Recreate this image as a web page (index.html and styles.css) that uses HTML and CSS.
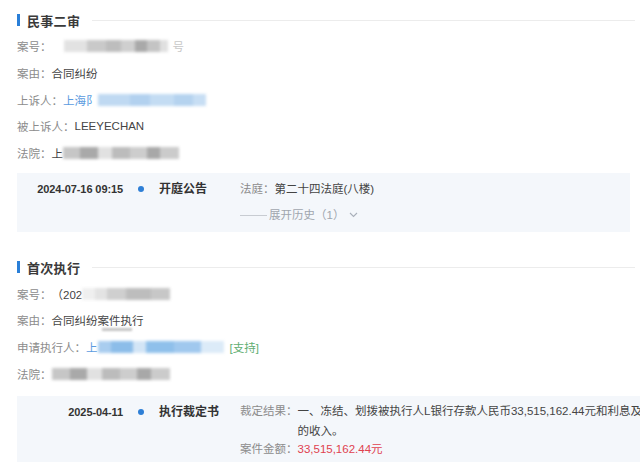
FILE: index.html
```html
<!DOCTYPE html>
<html lang="zh-CN">
<head>
    <meta charset="UTF-8">
    <title>案件信息</title>
    <link rel="stylesheet" href="styles.css">
</head>
<body>
    <div class="page">
        <div class="section">
            <div class="section-title"><span class="bar"></span><h2>民事二审</h2><span class="rule"></span></div>
            <div class="row"><span class="label">案号：</span><span class="blur gray w104 ml12"></span><span class="ghost">号</span></div>
            <div class="row"><span class="label">案由：</span><span class="value">合同纠纷</span></div>
            <div class="row"><span class="label">上诉人：</span><span class="link">上海阝</span><span class="blur blue w108"></span></div>
            <div class="row"><span class="label">被上诉人：</span><span class="value">LEEYECHAN</span></div>
            <div class="row"><span class="label">法院：</span><span class="value">上</span><span class="blur gray2 w116"></span></div>

            <div class="card">
                <div class="item">
                    <div class="date">2024-07-16 09:15</div>
                    <div class="dot-col"><span class="dot"></span></div>
                    <div class="kind">开庭公告</div>
                    <div class="detail">
                        <div class="line"><span class="label">法庭：</span><span class="value">第二十四法庭(八楼)</span></div>
                        <div class="line history"><span class="dash"></span>展开历史（1）<svg class="chev" width="9" height="6" viewBox="0 0 9 6"><path d="M1 1 L4.5 4.5 L8 1" fill="none" stroke="#a9b0ba" stroke-width="1.1"/></svg></div>
                    </div>
                </div>
            </div>
        </div>

        <div class="section second">
            <div class="section-title"><span class="bar"></span><h2>首次执行</h2><span class="rule"></span></div>
            <div class="row"><span class="label">案号：</span><span class="value">（202</span><span class="blur gray3 w88"></span></div>
            <div class="row"><span class="label">案由：</span><span class="value">合同纠纷案件执行</span><span class="smudge"></span></div>
            <div class="row"><span class="label">申请执行人：</span><span class="link">上</span><span class="blur blue2 w126"></span><span class="support">[支持]</span></div>
            <div class="row"><span class="label">法院：</span><span class="blur gray2 w118"></span></div>

            <div class="card wide">
                <div class="item">
                    <div class="date">2025-04-11</div>
                    <div class="dot-col"><span class="dot"></span></div>
                    <div class="kind">执行裁定书</div>
                    <div class="detail tight">
                        <div class="pair">
                            <span class="label">裁定结果：</span>
                            <span class="text">
                                <span class="block">一、冻结、划拨被执行人L银行存款人民币33,515,162.44元和利息及</span>
                                <span class="block">的收入。</span>
                            </span>
                        </div>
                        <div class="pair"><span class="label">案件金额：</span><span class="amount">33,515,162.44元</span></div>
                    </div>
                </div>
            </div>
        </div>
    </div>
</body>
</html>
```

FILE: styles.css
```css
html, body {
    margin: 0;
    overflow: hidden;
}
body {
    font-family: "Liberation Sans", "Noto Sans CJK SC", sans-serif;
    font-size: 11.5px;
    color: #444;
    background: #fff;
}
.page {
    padding: 10px 5px 0 17px;
}
.second {
    margin-top: 25px;
}
.section-title {
    display: flex;
    align-items: center;
    height: 20px;
}
.bar {
    width: 3px;
    height: 12px;
    background: #2a7fd8;
    margin-right: 7px;
}
.section-title h2 {
    margin: 0;
    font-size: 13px;
    font-weight: bold;
    color: #3a3a3a;
    letter-spacing: 0.3px;
}
.rule {
    flex: 1;
    height: 1px;
    background: #ececec;
    margin-left: 12px;
}
.section-title + .row {
    margin-top: 3px;
}
.row {
    display: flex;
    align-items: center;
    height: 26.7px;
    white-space: nowrap;
}
.label {
    color: #8c8c8c;
}
.value {
    color: #444;
}
.link {
    color: #5b9be0;
}
.support {
    color: #5fae72;
    margin-left: 6px;
}
.ghost {
    color: #c8c8c8;
    margin-left: 5px;
}
.blur {
    display: inline-block;
    height: 12px;
    filter: blur(1.4px);
}
.ml12 { margin-left: 12px; }
.w88 { width: 88px; }
.w104 { width: 104px; }
.w108 { width: 108px; }
.w116 { width: 116px; }
.w118 { width: 118px; }
.w126 { width: 126px; }
.gray {
    background: linear-gradient(90deg, #e2e2e2 0 22%, #c9c9c9 22% 40%, #bdbdbd 40% 55%, #cfcfcf 55% 68%, #a9a9a9 68% 80%, #c4c4c4 80% 92%, #e0e0e0 92%);
}
.gray2 {
    background: linear-gradient(90deg, #c6c6c6 0 15%, #a9a9a9 15% 30%, #e1e1e1 30% 42%, #bcbcbc 42% 58%, #cdcdcd 58% 72%, #a8a8a8 72% 84%, #cbcbcb 84%);
}
.gray3 {
    background: linear-gradient(90deg, #efefef 0 15%, #e3e3e3 15% 28%, #cfcfcf 28% 50%, #bdbdbd 50% 78%, #c7c7c7 78%);
}
.blue {
    background: linear-gradient(90deg, #bfd9f2 0 30%, #b2d1ef 30% 48%, #c3dcf3 48% 70%, #b5d3ef 70% 88%, #c7def4 88%);
}
.blue2 {
    background: linear-gradient(90deg, #a9cdef 0 10%, #8cbde9 10% 28%, #d3e5f6 28% 38%, #8fc0eb 38% 60%, #a0c8ee 60% 82%, #dcebf8 82%);
}
.smudge {
    display: inline-block;
    width: 30px;
    height: 3px;
    background: #c4c4c4;
    filter: blur(1px);
    margin: 18px 0 0 -42px;
}
.card {
    background: #f4f7fb;
    margin: 7px 5px 0 0;
    padding: 3px 0 4px;
    overflow: hidden;
}
.card.wide {
    margin: 9px -5px 0 0;
    padding: 3px 0 0;
    height: 70px;
}
.item {
    display: flex;
    align-items: flex-start;
}
.item > div {
    flex-shrink: 0;
}
.date {
    width: 106px;
    text-align: right;
    font-weight: bold;
    font-size: 11px;
    color: #333;
    line-height: 26px;
    letter-spacing: -0.1px;
}
.dot-col {
    width: 36px;
    height: 26px;
    display: flex;
    align-items: center;
    justify-content: center;
}
.dot {
    width: 6px;
    height: 6px;
    border-radius: 50%;
    background: #2e7fd6;
}
.kind {
    width: 81px;
    font-weight: bold;
    font-size: 12px;
    color: #333;
    line-height: 26px;
}
.detail .line {
    line-height: 26px;
    white-space: nowrap;
}
.history {
    display: flex;
    align-items: center;
    color: #a0a6ae;
}
.dash {
    width: 27px;
    height: 1px;
    background: #c8ccd2;
    margin-right: 2px;
}
.chev {
    margin-left: 5px;
}
.detail.tight {
    padding-top: 2px;
}
.pair {
    display: flex;
    line-height: 20px;
    white-space: nowrap;
}
.pair + .pair {
    line-height: 17px;
}
.text {
    color: #444;
}
.block {
    display: block;
}
.amount {
    color: #e0424f;
}
```
